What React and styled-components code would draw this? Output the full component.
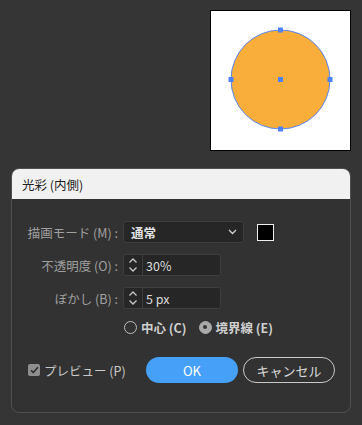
import React, { useState } from "react";
import styled, { createGlobalStyle } from "styled-components";

const Global = createGlobalStyle`
  body {
    margin: 0;
    background: #353535;
    font-family: "Noto Sans CJK JP", "Noto Sans", sans-serif;
  }
`;

const Page = styled.div`
  width: 362px;
  height: 425px;
  display: flex;
  flex-direction: column;
  align-items: flex-end;
  padding-top: 10px;
  box-sizing: border-box;
`;

const Preview = styled.div`
  width: 141px;
  height: 141px;
  margin-right: 11px;
  background: #fff;
  border: 1px solid #000;
  box-sizing: border-box;
`;

const Dialog = styled.div`
  align-self: flex-start;
  margin: 17px 0 0 11px;
  width: 340px;
  border: 1px solid #505050;
  border-radius: 8px;
  background: #323232;
  overflow: hidden;
  box-sizing: border-box;
`;

const TitleBar = styled.div`
  height: 30px;
  background: #f1f1f1;
  display: flex;
  align-items: center;
  padding-left: 10px;
  font-size: 12.5px;
  color: #222;
`;

const Body = styled.div`
  padding: 22px 15px 29px 14px;
  display: flex;
  flex-direction: column;
  gap: 11px;
`;

const Row = styled.div`
  display: flex;
  align-items: center;
  gap: 5px;
  height: 22px;
`;

const Label = styled.div`
  width: 92px;
  text-align: right;
  font-size: 12.5px;
  color: #a0a0a0;
  white-space: nowrap;
`;

const Select = styled.div`
  width: 121px;
  height: 22px;
  box-sizing: border-box;
  background: #262626;
  border: 1px solid #3e3e3e;
  border-radius: 3px;
  display: flex;
  align-items: center;
  justify-content: space-between;
  padding: 0 6px 0 7px;
  font-size: 12.5px;
  font-weight: bold;
  color: #e2e2e2;
`;

const Swatch = styled.div`
  width: 17px;
  height: 17px;
  margin-left: 8px;
  box-sizing: border-box;
  background: #000;
  border: 1.5px solid #eee;
`;

const Spinner = styled.div`
  width: 98px;
  height: 22px;
  box-sizing: border-box;
  background: #262626;
  border: 1px solid #3e3e3e;
  border-radius: 3px;
  display: flex;
  align-items: stretch;
`;

const Arrows = styled.div`
  width: 18px;
  border-right: 1px solid #3e3e3e;
  display: flex;
  align-items: center;
  justify-content: center;
`;

const Value = styled.div`
  padding-left: 3px;
  display: flex;
  align-items: center;
  font-size: 12.5px;
  color: #dcdcdc;
`;

const RadioRow = styled.div`
  display: flex;
  align-items: center;
  gap: 12px;
  margin-left: 98px;
  height: 14px;
`;

const RadioItem = styled.label`
  display: flex;
  align-items: center;
  gap: 4px;
  font-size: 12.5px;
  font-weight: 600;
  color: #cfcfcf;
`;

const RadioDot = styled.span`
  width: 13px;
  height: 13px;
  box-sizing: border-box;
  border-radius: 50%;
  border: 1.5px solid ${(p) => (p.$on ? "#a9a9a9" : "#bdbdbd")};
  background: ${(p) => (p.$on ? "#a9a9a9" : "transparent")};
  display: flex;
  align-items: center;
  justify-content: center;
  &::after {
    content: "";
    width: 4px;
    height: 4px;
    border-radius: 50%;
    background: ${(p) => (p.$on ? "#333" : "transparent")};
  }
`;

const Footer = styled.div`
  display: flex;
  align-items: center;
  margin-top: 12px;
  padding-left: 2px;
`;

const Check = styled.label`
  display: flex;
  align-items: center;
  gap: 4px;
  font-size: 12.5px;
  color: #c8c8c8;
  margin-right: auto;
`;

const Box = styled.span`
  width: 12px;
  height: 12px;
  border-radius: 2px;
  background: #8e8e8e;
  display: flex;
  align-items: center;
  justify-content: center;
`;

const Button = styled.button`
  width: 92px;
  height: 26px;
  border-radius: 13px;
  font-family: inherit;
  font-size: 13px;
  margin-left: 5px;
  box-sizing: border-box;
  cursor: pointer;
  background: ${(p) => (p.$primary ? "#46a0f7" : "transparent")};
  color: ${(p) => (p.$primary ? "#fff" : "#dadada")};
  border: ${(p) => (p.$primary ? "none" : "1.5px solid #c9c9c9")};
`;

const Chevron = () => (
  <svg width="9" height="6" viewBox="0 0 9 6">
    <path d="M1 1l3.5 3.5L8 1" fill="none" stroke="#d0d0d0" strokeWidth="1.3" />
  </svg>
);

const UpDown = () => (
  <svg width="10" height="16" viewBox="0 0 10 16">
    <path d="M1.5 5.5L5 2l3.5 3.5M1.5 10.5L5 14l3.5-3.5" fill="none" stroke="#c8c8c8" strokeWidth="1.3" />
  </svg>
);

const Shape = () => (
  <svg width="139" height="139" viewBox="0 0 139 139">
    <circle cx="69.5" cy="68.5" r="49.5" fill="#f9ae3b" stroke="#5a86f0" strokeWidth="1" />
    {[
      [69.5, 19],
      [20, 68.5],
      [119, 68.5],
      [69.5, 118],
      [69.5, 68.5],
    ].map(([x, y], i) => (
      <rect key={i} x={x - 2.5} y={y - 2.5} width="5" height="5" fill="#4d82f7" />
    ))}
  </svg>
);

export default function App() {
  const [mode, setMode] = useState("edge");
  return (
    <Page>
      <Global />
      <Preview>
        <Shape />
      </Preview>
      <Dialog>
        <TitleBar>光彩 (内側)</TitleBar>
        <Body>
          <Row>
            <Label>描画モード (M) :</Label>
            <Select>
              <span>通常</span>
              <Chevron />
            </Select>
            <Swatch />
          </Row>
          <Row>
            <Label>不透明度 (O) :</Label>
            <Spinner>
              <Arrows>
                <UpDown />
              </Arrows>
              <Value>30%</Value>
            </Spinner>
          </Row>
          <Row>
            <Label>ぼかし (B) :</Label>
            <Spinner>
              <Arrows>
                <UpDown />
              </Arrows>
              <Value>5 px</Value>
            </Spinner>
          </Row>
          <RadioRow>
            <RadioItem onClick={() => setMode("center")}>
              <RadioDot $on={mode === "center"} />
              中心 (C)
            </RadioItem>
            <RadioItem onClick={() => setMode("edge")}>
              <RadioDot $on={mode === "edge"} />
              境界線 (E)
            </RadioItem>
          </RadioRow>
          <Footer>
            <Check>
              <Box>
                <svg width="9" height="8" viewBox="0 0 9 8">
                  <path d="M1 4.2l2.2 2.3L8 1.2" fill="none" stroke="#2e2e2e" strokeWidth="1.6" />
                </svg>
              </Box>
              プレビュー (P)
            </Check>
            <Button $primary>OK</Button>
            <Button>キャンセル</Button>
          </Footer>
        </Body>
      </Dialog>
    </Page>
  );
}
